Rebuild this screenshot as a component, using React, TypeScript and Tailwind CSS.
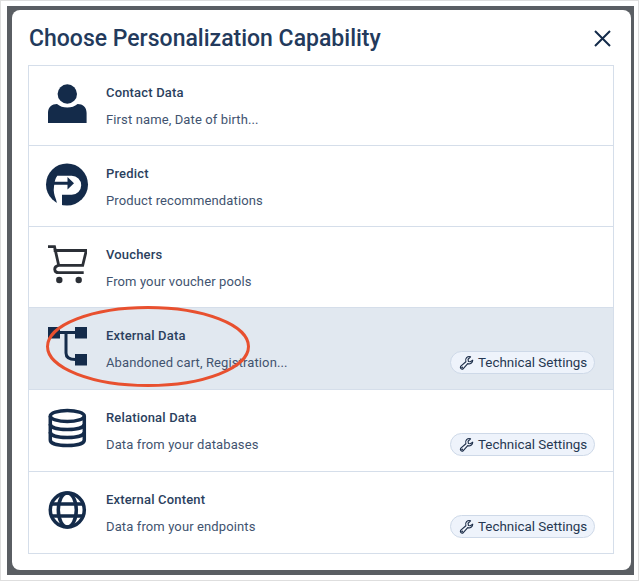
import { ReactNode } from 'react';

function ContactIcon() {
  return (
    <svg width="40" height="43" viewBox="0 0 40 43" className="text-[#142b4a]">
      <circle cx="20.300" cy="12" r="9.700" fill="currentColor" />
      <path d="M1 41V31c0-6 4-9 9-9 3 2.500 6 3.500 10.300 3.500s7.300-1 10.300-3.500c5 0 9 3 9 9v10z" fill="currentColor" />
    </svg>
  );
}

function PredictIcon() {
  return (
    <svg width="44" height="44" viewBox="0 0 44 44">
      <circle cx="22" cy="21.500" r="21" fill="#142b4a" />
      <path
        d="M12.300 12.800H26.700a9.500 9.500 0 0 1 0 19H17V44H13L11 36.500Q8 29.500 9 23.500Q9.500 16.500 12.300 12.800z"
        fill="#fff"
      />
      <path d="M9 18.800H22.500V14L29 20.300L22.500 26.500V21.800H9z" fill="#142b4a" />
    </svg>
  );
}

function CartIcon() {
  return (
    <svg width="40" height="40" viewBox="0 0 40 40" fill="none" stroke="#2b2f36" strokeWidth="2.800">
      <path d="M1 2.700H7.500L11.700 21.300" />
      <path d="M6.700 6.500H39.300L35.700 21.300H11.700Q7.700 22 7.700 25.300Q8 28.700 11.700 28.700H36.700" />
      <circle cx="12.300" cy="36" r="3.200" fill="#2b2f36" stroke="none" />
      <circle cx="31.700" cy="36" r="3.200" fill="#2b2f36" stroke="none" />
    </svg>
  );
}

function FlowIcon() {
  return (
    <svg width="40" height="42" viewBox="0 0 40 42" className="text-[#142b4a]">
      <rect x="1" y="2" width="12" height="11.500" fill="currentColor" />
      <rect x="28" y="2" width="12" height="11.500" fill="currentColor" />
      <rect x="28" y="29" width="12" height="11.500" fill="currentColor" />
      <path d="M12 7.500H29M19 7.500V28c0 4.500 3 6.500 9.500 6.500" fill="none" stroke="currentColor" strokeWidth="3" />
    </svg>
  );
}

function DatabaseIcon() {
  return (
    <svg width="40" height="42" viewBox="0 0 40 42" fill="none" stroke="#142b4a" strokeWidth="3.500">
      <ellipse cx="20.300" cy="9" rx="17" ry="5.500" />
      <path d="M3.300 9V33c0 3.500 7.500 5.500 17 5.500s17-2 17-5.500V9" />
      <path d="M3.300 17c0 3.500 7.500 5.500 17 5.500s17-2 17-5.500" />
      <path d="M3.300 25c0 3.500 7.500 5.500 17 5.500s17-2 17-5.500" />
    </svg>
  );
}

function GlobeIcon() {
  return (
    <svg width="40" height="42" viewBox="0 0 40 42" fill="none" stroke="#142b4a" strokeWidth="3.500">
      <circle cx="20.300" cy="21" r="17" />
      <ellipse cx="20.300" cy="21" rx="9" ry="17" />
      <path d="M4 15H37M4 27H37" />
    </svg>
  );
}

function WrenchIcon() {
  return (
    <svg width="15" height="16" viewBox="0 0 24 24" fill="none" stroke="#1e2f4a" strokeWidth="1.800" strokeLinejoin="round">
      <path d="M22 7.500a6 6 0 0 1-8 5.500L6.500 21.500a3 3 0 0 1-4-4L11 10a6 6 0 0 1 7.500-8l-4 4 .5 3.500 3 .5z" />
      <circle cx="5" cy="19" r="0.600" />
    </svg>
  );
}

type Row = { title: string; sub: string; icon: ReactNode; tech?: boolean; active?: boolean; box: string };

const ROWS: Row[] = [
  { title: 'Contact Data', sub: 'First name, Date of birth...', icon: <ContactIcon />, box: 'h-[79px] pt-[16px]' },
  { title: 'Predict', sub: 'Product recommendations', icon: <PredictIcon />, box: 'h-[81px] pt-[17px] border-t' },
  { title: 'Vouchers', sub: 'From your voucher pools', icon: <CartIcon />, box: 'h-[81px] pt-[17px] border-t' },
  { title: 'External Data', sub: 'Abandoned cart, Registration...', icon: <FlowIcon />, tech: true, active: true, box: 'h-[82px] pt-[17px] border-t' },
  { title: 'Relational Data', sub: 'Data from your databases', icon: <DatabaseIcon />, tech: true, box: 'h-[82px] pt-[17px] border-t' },
  { title: 'External Content', sub: 'Data from your endpoints', icon: <GlobeIcon />, tech: true, box: 'h-[82px] pt-[17px] border-t' },
];

export default function App() {
  return (
    <div className="h-[583px] w-[641px] bg-white font-['Roboto',sans-serif]">
      <div className="h-[581px] w-[639px] border border-[#dedede] pt-[5px] pl-[6px]">
        <div className="h-[569px] w-[627px] bg-[#5a5e63] pt-[4px] pl-[5px]">
          <div className="relative h-[560px] w-[619px] rounded-lg bg-white pl-[16px] pr-[17px]">
            <div className="flex h-[55px] items-center justify-between pl-px pr-0.5">
              <h1 className="pt-[3px] text-[23px] font-medium text-[#233a5c]">Choose Personalization Capability</h1>
              <svg width="20" height="20" viewBox="0 0 20 20" stroke="#142b4a" strokeWidth="2">
                <path d="M3 3l15 15M18 3L3 18" />
              </svg>
            </div>
            <div className="border border-[#d5deea]">
              {ROWS.map((row) => (
                <div
                  key={row.title}
                  className={`flex border-[#d5deea] ${row.box} ${row.active ? 'bg-[#e1e8f0]' : ''}`}
                >
                  <div className="flex w-[77px] justify-center pr-px">{row.icon}</div>
                  <div className="flex-1 pt-px">
                    <div className="text-[13px] leading-[20px] font-medium tracking-[0.17px] text-[#2b3f5e]">{row.title}</div>
                    <div className="mt-[7px] text-[13px] leading-[20px] tracking-[0.12px] text-[#41536f]">{row.sub}</div>
                  </div>
                  {row.tech && (
                    <div className="flex items-end pr-[18px] pb-[15px]">
                      <button className="flex h-[23px] w-[145px] items-center gap-[4px] rounded-full border border-[#ced9e8] bg-[#eef3fb] pt-px pl-[8px] text-[13.400px] text-[#263852]">
                        <WrenchIcon />
                        Technical Settings
                      </button>
                    </div>
                  )}
                </div>
              ))}
            </div>
            <svg className="pointer-events-none absolute top-[295px] left-[32px]" width="210" height="86" viewBox="0 0 210 86" fill="none">
              <ellipse cx="104" cy="41.500" rx="100.500" ry="39" stroke="#e8502f" strokeWidth="3" />
            </svg>
          </div>
        </div>
      </div>
    </div>
  );
}
